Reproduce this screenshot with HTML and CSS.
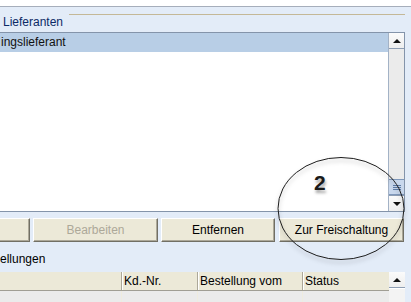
FILE: index.html
```html
<!DOCTYPE html>
<html lang="de">
<head>
  <meta charset="UTF-8" />
  <meta name="viewport" content="width=device-width, initial-scale=1.0"/>
  <title>Lieferanten</title>
  <link rel="stylesheet" href="styles.css">
</head>
<body>
  <div class="top-strip"></div>

  <div class="panel">
    <div class="group-head">
      <span class="legend">Lieferanten</span>
      <span class="group-line"></span>
    </div>

    <div class="list">
      <div class="list-rows">
        <div class="list-row selected">ingslieferant</div>
      </div>
      <div class="vscroll">
        <div class="sb-btn"><span class="arrow-up"></span></div>
        <div class="sb-track"></div>
        <div class="sb-thumb"><span></span><span></span><span></span></div>
        <div class="sb-btn sb-btn-bottom"><span class="arrow-down"></span></div>
      </div>
    </div>

    <div class="button-row">
      <button class="btn btn-cut"></button>
      <button class="btn btn-edit" disabled>Bearbeiten</button>
      <button class="btn btn-remove">Entfernen</button>
      <button class="btn btn-release">Zur Freischaltung</button>
    </div>

    <div class="section-label">ellungen</div>

    <div class="table">
      <div class="table-main">
        <div class="thead">
          <div class="th col-first"></div>
          <div class="th col-kd">Kd.-Nr.</div>
          <div class="th col-date">Bestellung vom</div>
          <div class="th col-status">Status</div>
        </div>
        <div class="tbody">
          <div class="td col-first"></div>
          <div class="td col-kd"></div>
          <div class="td col-date"></div>
          <div class="td col-status"></div>
        </div>
      </div>
      <div class="vscroll vscroll-table">
        <div class="sb-btn"><span class="arrow-up"></span></div>
        <div class="sb-thumb sb-thumb-plain"></div>
      </div>
    </div>
  </div>

  <!-- annotation drawn over the screen -->
  <div class="callout">
    <svg class="callout-ring" width="132" height="110" viewBox="0 0 132 110">
      <ellipse cx="65" cy="53.5" rx="63" ry="51" fill="none" stroke="#1c1c1c" stroke-width="1"/>
    </svg>
    <span class="callout-num">2</span>
  </div>
</body>
</html>
```

FILE: styles.css
```css
body {
  font-family: 'Liberation Sans', Arial, sans-serif;
  font-size: 12px;
  margin: 0;
  padding: 0;
  background: #ffffff;
  color: #000;
  overflow: hidden;
}

.top-strip {
  height: 6px;
  background: #ffffff;
}

.panel {
  background: #e3ecf8;
  border-top: 1px solid #a6aebb;
  height: 295px;
  padding-right: 6px;
  overflow: hidden;
}

/* group box title */
.group-head {
  height: 25px;
  display: flex;
}

.legend {
  padding: 8px 0 0 3px;
  line-height: 14px;
  color: #0c2a66;
}

.group-line {
  flex: 1;
  height: 0;
  margin: 7px 0 0 6px;
  border-top: 1px solid #c4b897;
}

/* list */
.list {
  height: 180px;
  box-sizing: border-box;
  border: 1px solid #8494aa;
  border-left: none;
  background: #ffffff;
  display: flex;
}

.list-rows {
  flex: 1;
}

.list-row {
  height: 19px;
  line-height: 19px;
  padding-left: 1px;
  color: #111;
}

.list-row.selected {
  background: #b8cee6;
}

/* scrollbar */
.vscroll {
  width: 15px;
  border-left: 1px solid #a3b2c6;
  background: #ebebeb;
  display: flex;
  flex-direction: column;
}

.sb-btn {
  height: 15px;
  background: linear-gradient(#fbfbfb, #eeeeee);
  border-bottom: 1px solid #8d9db3;
  display: flex;
  align-items: center;
  justify-content: center;
}

.sb-btn-bottom {
  border-bottom: none;
  border-top: 1px solid #8d9db3;
}

.arrow-up {
  width: 0;
  height: 0;
  border-left: 4px solid transparent;
  border-right: 4px solid transparent;
  border-bottom: 4px solid #111;
}

.arrow-down {
  width: 0;
  height: 0;
  border-left: 4px solid transparent;
  border-right: 4px solid transparent;
  border-top: 4px solid #111;
}

.sb-track {
  flex: 1;
}

.sb-thumb {
  height: 14px;
  background: #c9d8ed;
  border-top: 1px solid #7f98bb;
  border-bottom: 1px solid #7f98bb;
  display: flex;
  flex-direction: column;
  align-items: center;
  justify-content: center;
  gap: 1px;
}

.sb-thumb span {
  width: 8px;
  height: 1px;
  background: #5d7ca8;
}

.sb-thumb-plain {
  height: 30px;
  background: #f3f3f3;
  border-top: 1px solid #ffffff;
  border-bottom: none;
}

/* buttons */
.button-row {
  display: flex;
  margin-top: 6px;
  height: 24px;
}

.btn {
  font-family: 'Liberation Sans', Arial, sans-serif;
  font-size: 12px;
  height: 24px;
  padding: 0;
  background: #ece9d8;
  color: #000;
  border: 1px solid;
  border-color: #ffffff #716f64 #716f64 #ffffff;
  box-shadow: inset -1px -1px 0 #aca899;
  border-radius: 0;
}

.btn:disabled {
  color: #aca899;
}

.btn-cut {
  width: 30px;
  border-left: none;
}

.btn-edit {
  width: 125px;
  margin-left: 3px;
}

.btn-remove {
  width: 114px;
  margin-left: 3px;
}

.btn-release {
  width: 125px;
  margin-left: 4px;
}

.section-label {
  padding-top: 10px;
  line-height: 14px;
  height: 14px;
  margin-bottom: 6px;
}

/* table */
.table {
  display: flex;
  height: 60px;
}

.table-main {
  flex: 1;
}

.thead {
  display: flex;
  height: 18px;
  background: #ece9d8;
  border-bottom: 1px solid #a09e94;
}

.th {
  line-height: 18px;
  padding-left: 2px;
  box-sizing: border-box;
  border-left: 1px solid #aca899;
  box-shadow: inset 1px 0 0 #ffffff;
  white-space: nowrap;
}

.tbody {
  display: flex;
  height: 40px;
  background: #ebebeb;
}

.td {
  box-sizing: border-box;
  border-left: 1px solid #efecdf;
}

.col-first {
  width: 121px;
  border-left: none;
  box-shadow: none;
}

.col-kd {
  width: 76px;
}

.col-date {
  width: 105px;
}

.col-status {
  flex: 1;
}

.vscroll-table {
  width: 16px;
  border-left: none;
}

/* annotation */
.callout {
  position: absolute;
  left: 276px;
  top: 155px;
  width: 132px;
  height: 110px;
  pointer-events: none;
}

.callout-ring {
  display: block;
  filter: drop-shadow(0 3px 2px rgba(0, 0, 0, 0.3));
}

.callout-num {
  position: absolute;
  left: 38px;
  top: 17px;
  font-size: 21px;
  line-height: 21px;
  font-weight: bold;
  color: #1a1a1a;
  text-shadow: 1px 3px 3px rgba(0, 0, 0, 0.35);
}
```
